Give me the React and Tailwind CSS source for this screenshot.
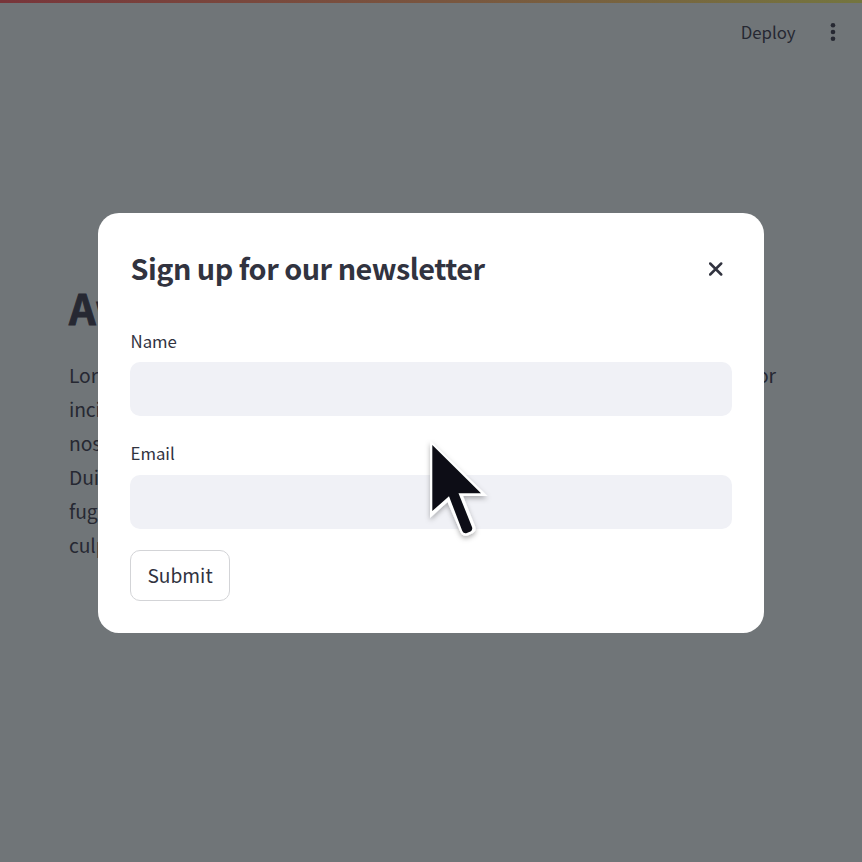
const LINES = [
  'Lorem ipsum dolor sit amet, consectetur adipiscing elit, sed do eiusmod tempor',
  'incididunt ut labore et dolore magna aliqua. Ut enim ad minim veniam, quis',
  'nostrud exercitation ullamco laboris nisi ut aliquip ex ea commodo',
  'Duis aute irure dolor in reprehenderit in voluptate velit esse cillum dolore',
  'fugiat nulla pariatur. Excepteur sint occaecat cupidatat non proident, sunt in',
  'culpa qui officia deserunt mollit anim id est laborum.',
];

function Page() {
  return (
    <div className="flex h-full flex-col text-[#262832]">
      <div className="h-[3px] shrink-0 bg-linear-to-r from-[#78353a] via-[#79553f] to-[#74753f]" />
      <header className="flex h-[58px] shrink-0 items-center justify-end pr-[26px]">
        <span className="text-[16.8px] leading-none">Deploy</span>
        <svg className="ml-[34.5px]" width="6" height="20" viewBox="0 0 6 20" fill="currentColor">
          <circle cx="3" cy="3.3" r="2.3" />
          <circle cx="3" cy="10" r="2.3" />
          <circle cx="3" cy="16.7" r="2.3" />
        </svg>
      </header>
      <main className="px-[69px] pt-[216px]">
        <h1 className="text-[41.6px] leading-[60px] font-bold [-webkit-text-stroke:0.9px_#262832]">Awesome app</h1>
        <p className="mt-[20.5px] text-[19.3px] leading-[34.1px] tracking-[-0.11px] whitespace-nowrap">
          {LINES.map((line) => (
            <span key={line} className="block">{line}</span>
          ))}
        </p>
      </main>
    </div>
  );
}

function Field({ label, className }) {
  return (
    <label className={className}>
      <span className="block pl-[0.5px] text-[16.8px] leading-[24px]">{label}</span>
      <input className="mt-[9.4px] block h-[54px] w-full rounded-[10px] bg-[#f0f1f6] px-4 outline-none" />
    </label>
  );
}

function Dialog() {
  return (
    <section className="flex h-[420px] w-[666px] flex-col rounded-[21px] bg-white px-8 text-[#31333f]">
      <div className="mt-[35px] flex h-[40px] items-center justify-between">
        <h2 className="pl-[0.5px] text-[28.8px] leading-[40px] font-bold tracking-[-0.51px]">Sign up for our newsletter</h2>
        <button aria-label="Close" className="mt-[1px] mr-[9.5px]">
          <svg width="14" height="14" viewBox="0 0 14 14" fill="none" stroke="currentColor" strokeWidth="2.5" strokeLinecap="round">
            <path d="M1.2 1.5 12.2 12.5M12.2 1.5 1.2 12.5" />
          </svg>
        </button>
      </div>
      <Field label="Name" className="mt-[41px]" />
      <Field label="Email" className="mt-[25px]" />
      <button className="mt-[21.2px] h-[51px] w-[100px] rounded-[10px] border border-[#d3d4d7] text-[19.2px] leading-none">
        Submit
      </button>
    </section>
  );
}

function Cursor() {
  return (
    <svg className="absolute top-[430px] left-[400px]" width="110" height="120" viewBox="0 0 110 120">
      <defs>
        <filter id="shadow" x="-20%" y="-20%" width="150%" height="150%">
          <feDropShadow dx="0" dy="2.5" stdDeviation="2.5" floodOpacity="0.3" />
        </filter>
      </defs>
      <g filter="url(#shadow)">
        <path d="M30 10.5V88L47.5 72L60 101Q62 107 67.5 105.5L73 103Q77 100.5 75 96L63 66H87.5Z" fill="#fff" />
        <path d="M32.3 15V81L49 66.3L62.3 101Q63.8 104 66.8 103L70.5 101.5Q73 100 72 97L58.5 63.2H81Z" fill="#0e1117" />
      </g>
    </svg>
  );
}

export default function App() {
  return (
    <div className="relative h-[862px] w-[862px] overflow-hidden bg-[#707578] font-['Noto_Sans_CJK_SC',sans-serif]">
      <Page />
      <div className="absolute inset-0 flex items-start justify-center pt-[213px]">
        <Dialog />
      </div>
      <Cursor />
    </div>
  );
}
